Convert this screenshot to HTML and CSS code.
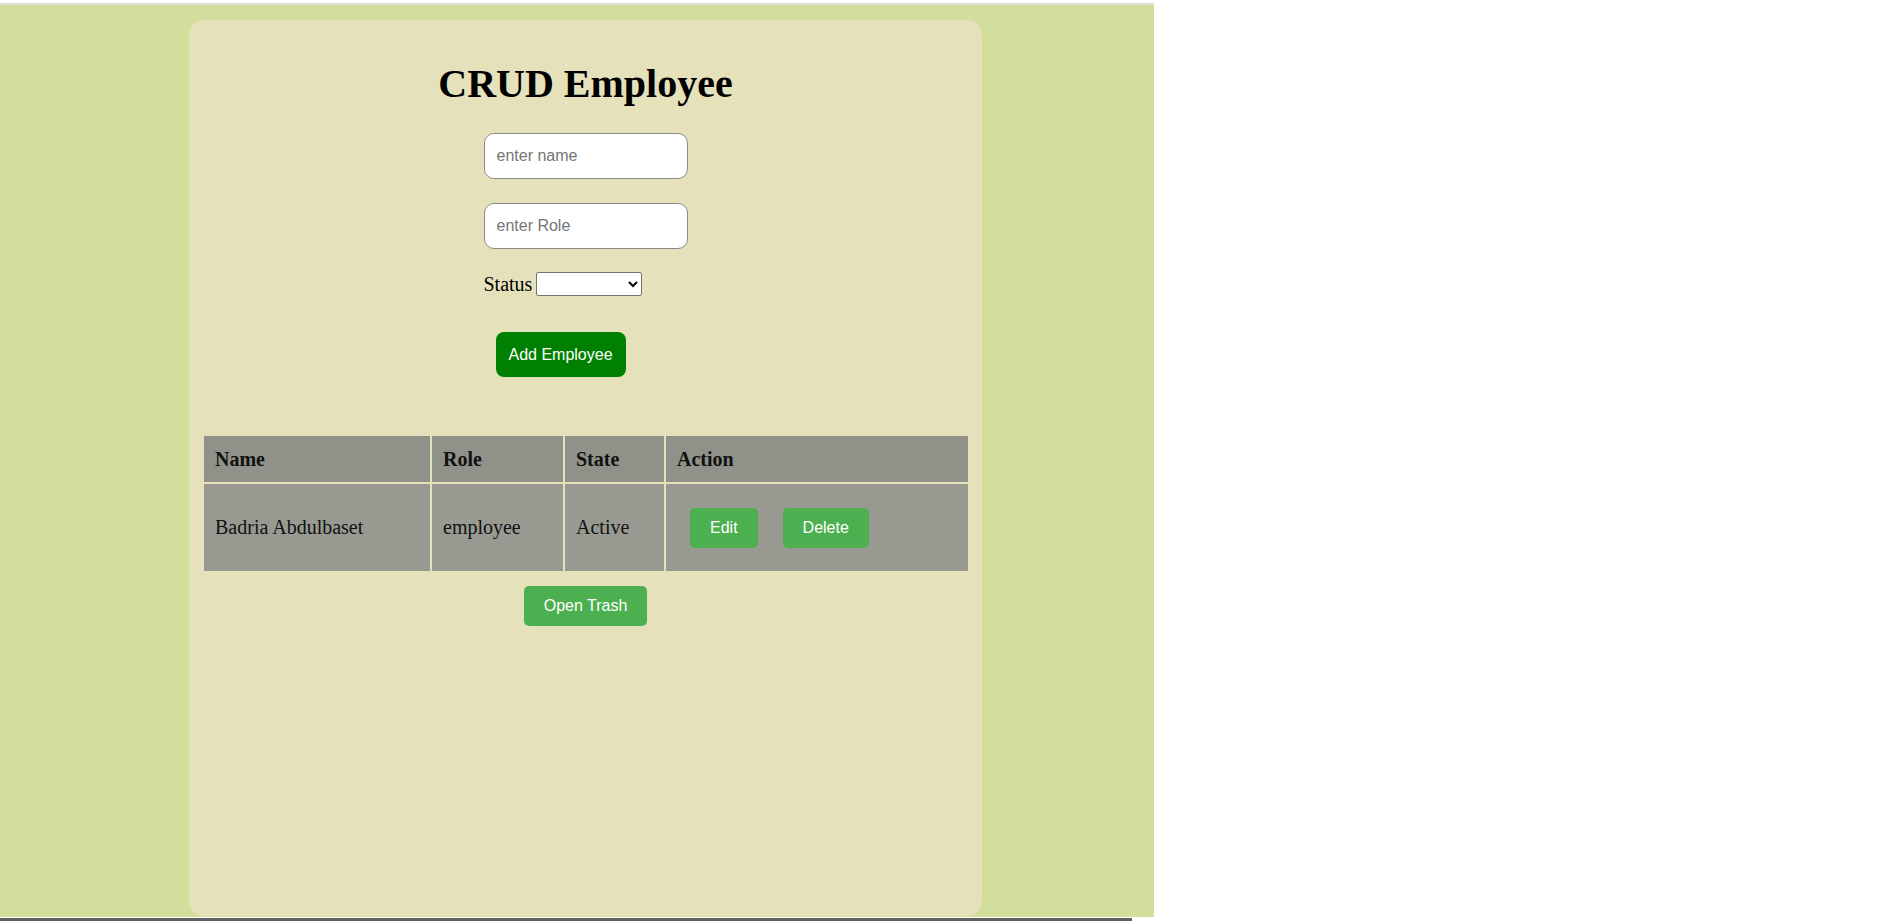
FILE: index.html
```html
<!DOCTYPE html>
<html lang="en">
<head>
<meta charset="utf-8">
<title>CRUD Employee</title>
<link rel="stylesheet" href="styles.css">
</head>
<body>
<div class="topline"></div>
<main class="page">
  <section class="card">
    <h1 class="title">CRUD Employee</h1>
    <form class="form">
      <input class="field" type="text" placeholder="enter name">
      <input class="field field-second" type="text" placeholder="enter Role">
      <div class="status-row">
        <label class="status-label" for="status">Status</label>
        <select class="status-select" id="status">
          <option></option>
          <option>Active</option>
          <option>Inactive</option>
        </select>
      </div>
      <button class="btn-add" type="button">Add Employee</button>
    </form>
    <table class="emp-table">
      <thead>
        <tr>
          <th class="col-name">Name</th>
          <th class="col-role">Role</th>
          <th class="col-state">State</th>
          <th class="col-action">Action</th>
        </tr>
      </thead>
      <tbody>
        <tr>
          <td>Badria Abdulbaset</td>
          <td>employee</td>
          <td>Active</td>
          <td>
            <div class="actions">
              <button class="btn-small" type="button">Edit</button>
              <button class="btn-small" type="button">Delete</button>
            </div>
          </td>
        </tr>
      </tbody>
    </table>
    <div class="trash-row">
      <button class="btn-small btn-trash" type="button">Open Trash</button>
    </div>
  </section>
</main>
<div class="bottom-gap"></div>
<div class="scrollbar"></div>
</body>
</html>
```

FILE: styles.css
```css
html, body {
  margin: 0;
  padding: 0;
  background: #ffffff;
  font-family: "Liberation Serif", "Times New Roman", serif;
  color: #000;
}

.topline {
  margin-top: 3px;
  width: 1154px;
  height: 2px;
  background: #dfdfdf;
}

.page {
  box-sizing: border-box;
  width: 1154px;
  height: 912px;
  background: #d3de9d;
  padding: 15px 0 0 189px;
}

.card {
  box-sizing: border-box;
  width: 793px;
  height: 896px;
  background: #e5e2bb;
  border-radius: 15px;
  padding: 41px 15px 0;
}

.title {
  margin: 0;
  font-size: 40px;
  line-height: 46px;
  font-weight: bold;
  text-align: center;
}

.form {
  width: 204px;
  margin: 26px auto 0;
  display: flex;
  flex-direction: column;
  align-items: flex-start;
}

.field {
  box-sizing: border-box;
  width: 204px;
  height: 46px;
  padding: 0 12px;
  border: 1px solid #8a8a8a;
  border-radius: 10px;
  background: #fff;
  font-family: "Liberation Sans", Arial, sans-serif;
  font-size: 16px;
  outline: none;
}

.field::placeholder {
  color: #757575;
}

.field-second {
  margin-top: 24px;
}

.status-row {
  margin-top: 22px;
  height: 26px;
  display: flex;
  align-items: center;
  gap: 4px;
}

.status-label {
  font-size: 20px;
  line-height: 23px;
}

.status-select {
  box-sizing: border-box;
  width: 106px;
  height: 24px;
  font-size: 16px;
  border: 1px solid #767676;
  border-radius: 2px;
  background: #fff;
}

.btn-add {
  margin: 35px 0 0 12px;
  height: 45px;
  padding: 0 13px;
  border: none;
  border-radius: 8px;
  background: #008000;
  color: #fff;
  font-family: "Liberation Sans", Arial, sans-serif;
  font-size: 16px;
  cursor: pointer;
}

.emp-table {
  margin: 57px 0 0 -2px;
  width: 768px;
  table-layout: fixed;
  border-collapse: separate;
  border-spacing: 2px;
  font-size: 20px;
  color: #111;
}

.emp-table th,
.emp-table td {
  padding: 0 11px;
  text-align: left;
  vertical-align: middle;
}

.emp-table th {
  height: 46px;
  background: #909189;
  font-weight: bold;
}

.emp-table td {
  height: 87px;
  background: #989a92;
  font-weight: normal;
}

.col-name { width: 204px; }
.col-role { width: 109px; }
.col-state { width: 77px; }
.col-action { width: 280px; }

.actions {
  display: flex;
  gap: 25px;
  padding-left: 13px;
}

.btn-small {
  height: 40px;
  padding: 0 20px;
  border: none;
  border-radius: 5px;
  background: #4caf50;
  color: #fff;
  font-family: "Liberation Sans", Arial, sans-serif;
  font-size: 16px;
  cursor: pointer;
}

.trash-row {
  margin-top: 13px;
  display: flex;
  justify-content: center;
}

.bottom-gap {
  height: 1px;
}

.scrollbar {
  width: 1132px;
  height: 3px;
  background: #616161;
}
```
